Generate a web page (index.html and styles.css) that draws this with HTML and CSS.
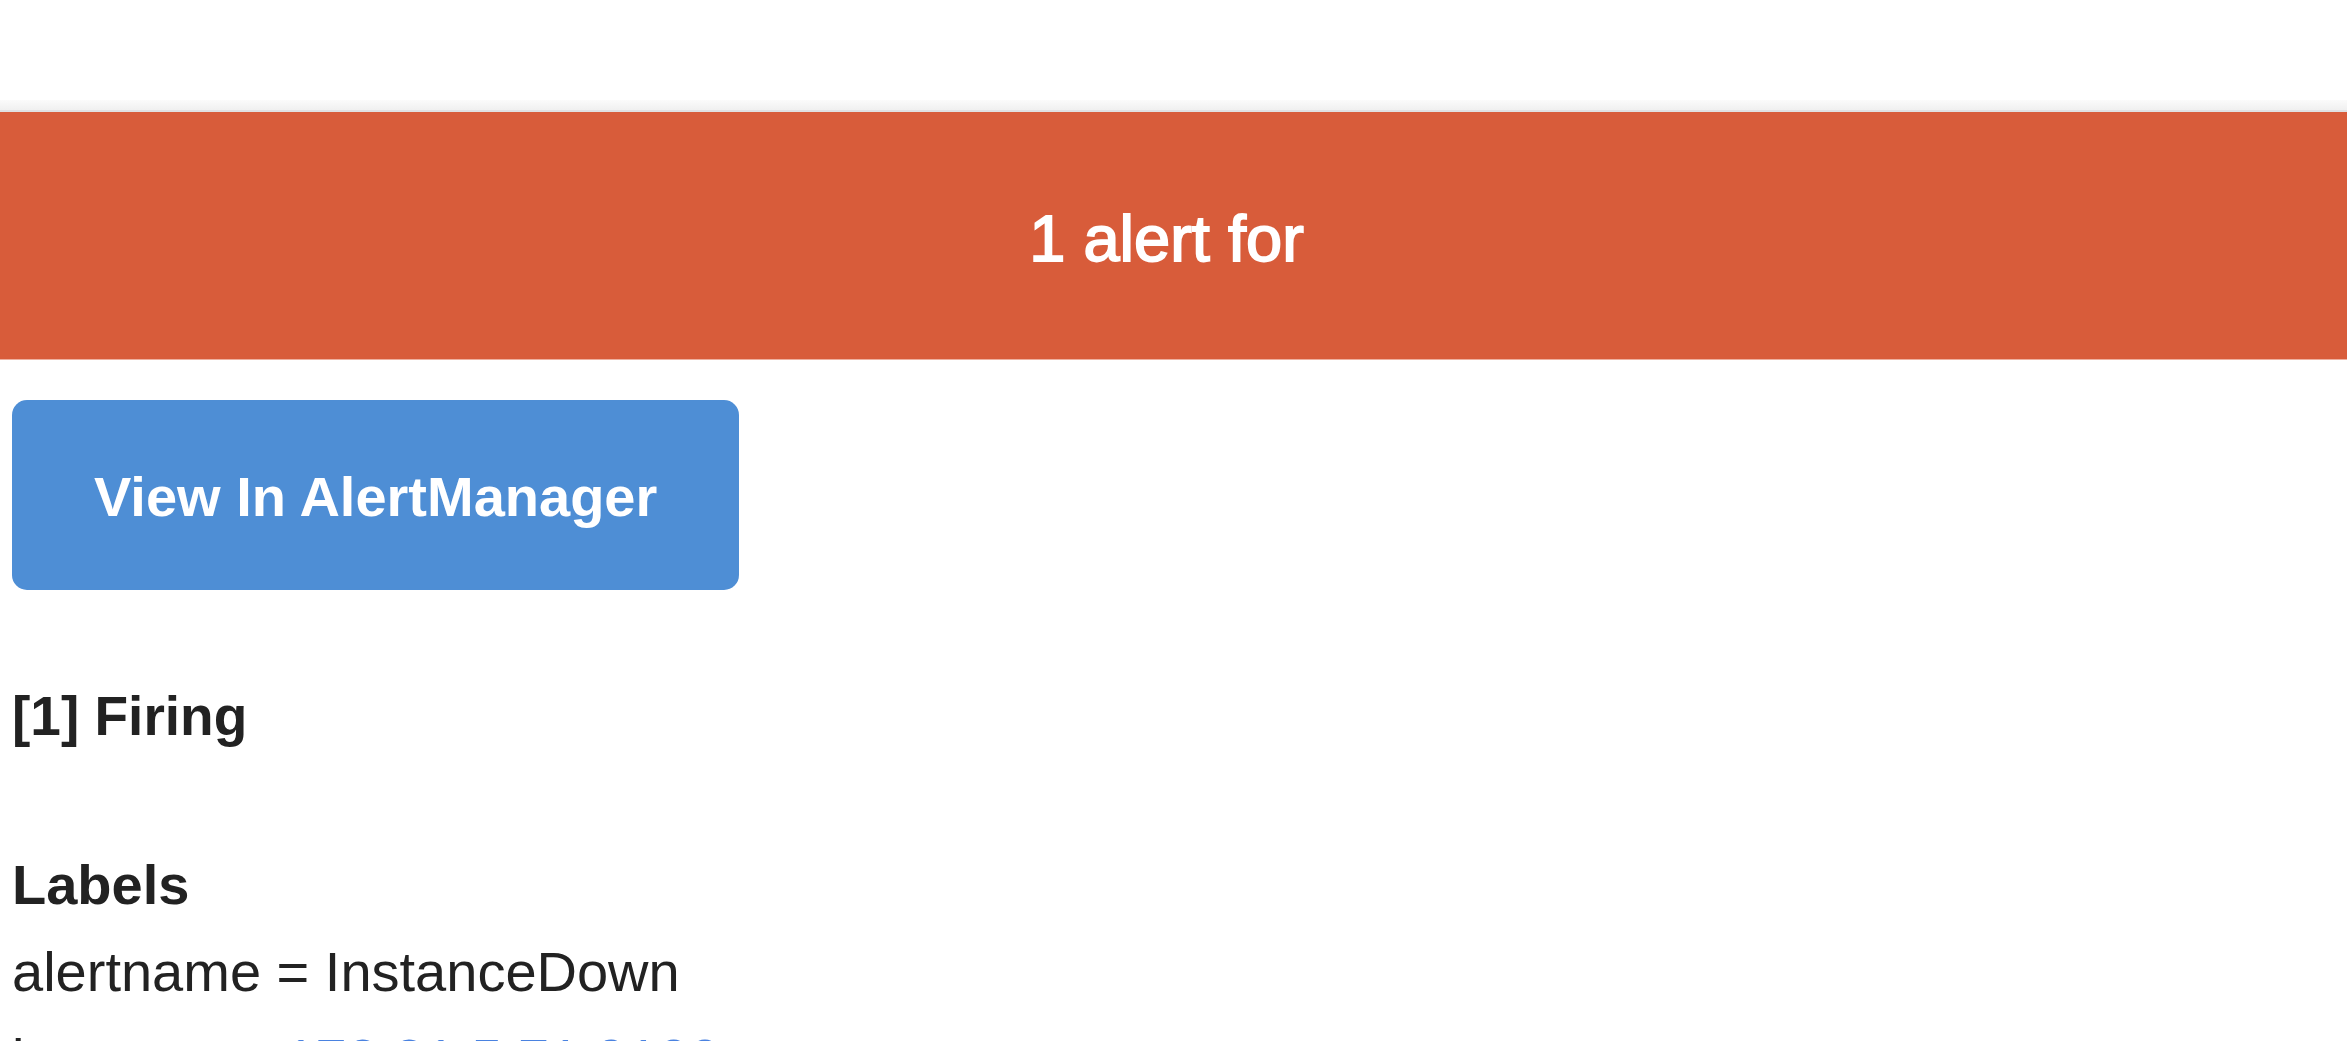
FILE: index.html
```html
<!DOCTYPE html>
<html lang="en">
<head>
<meta charset="utf-8">
<title>Alert</title>
<link rel="stylesheet" href="styles.css">
</head>
<body>
  <div class="top-space"></div>
  <div class="shade"></div>
  <div class="alert-header">1 alert for</div>
  <main class="content">
    <a class="btn" href="#">View In AlertManager</a>
    <h2 class="alert-title">[1] Firing</h2>
    <div class="labels">
      <strong>Labels</strong><br>
      alertname = InstanceDown<br>
      instance = <a class="link" href="#">172.31.5.71:9100</a>
    </div>
  </main>
</body>
</html>
```

FILE: styles.css
```css
html, body {
  margin: 0;
  padding: 0;
  background: #ffffff;
}

body {
  font-family: "Liberation Sans", Arial, Helvetica, sans-serif;
  color: #222222;
  font-size: 56px;
  overflow: hidden;
}

.top-space {
  height: 100px;
}

.shade {
  height: 10px;
  background: linear-gradient(#fbfbfb, #f0f0f0);
  border-bottom: 2px solid #e1e1e1;
}

.alert-header {
  box-sizing: border-box;
  height: 248px;
  padding: 94px 14px 0 0;
  background: #d85c3a;
  color: #ffffff;
  font-size: 65px;
  line-height: 65px;
  text-align: center;
  -webkit-text-stroke: 1.8px #ffffff;
  border-bottom: 1px solid #eeb09f;
}

.content {
  padding: 0 12px;
}

.btn {
  display: block;
  width: fit-content;
  margin-top: 40px;
  padding: 69px 82px 65px;
  background: #4e8ed5;
  color: #ffffff;
  border-radius: 15px;
  font-weight: bold;
  font-size: 56px;
  line-height: 56px;
  text-decoration: none;
}

.alert-title {
  margin: 83px 0 0;
  font-size: 55px;
  font-weight: bold;
  line-height: 87px;
}

.labels {
  margin-top: 81px;
  line-height: 87px;
}

.link {
  color: #4a82e0;
  text-decoration: none;
}
```
